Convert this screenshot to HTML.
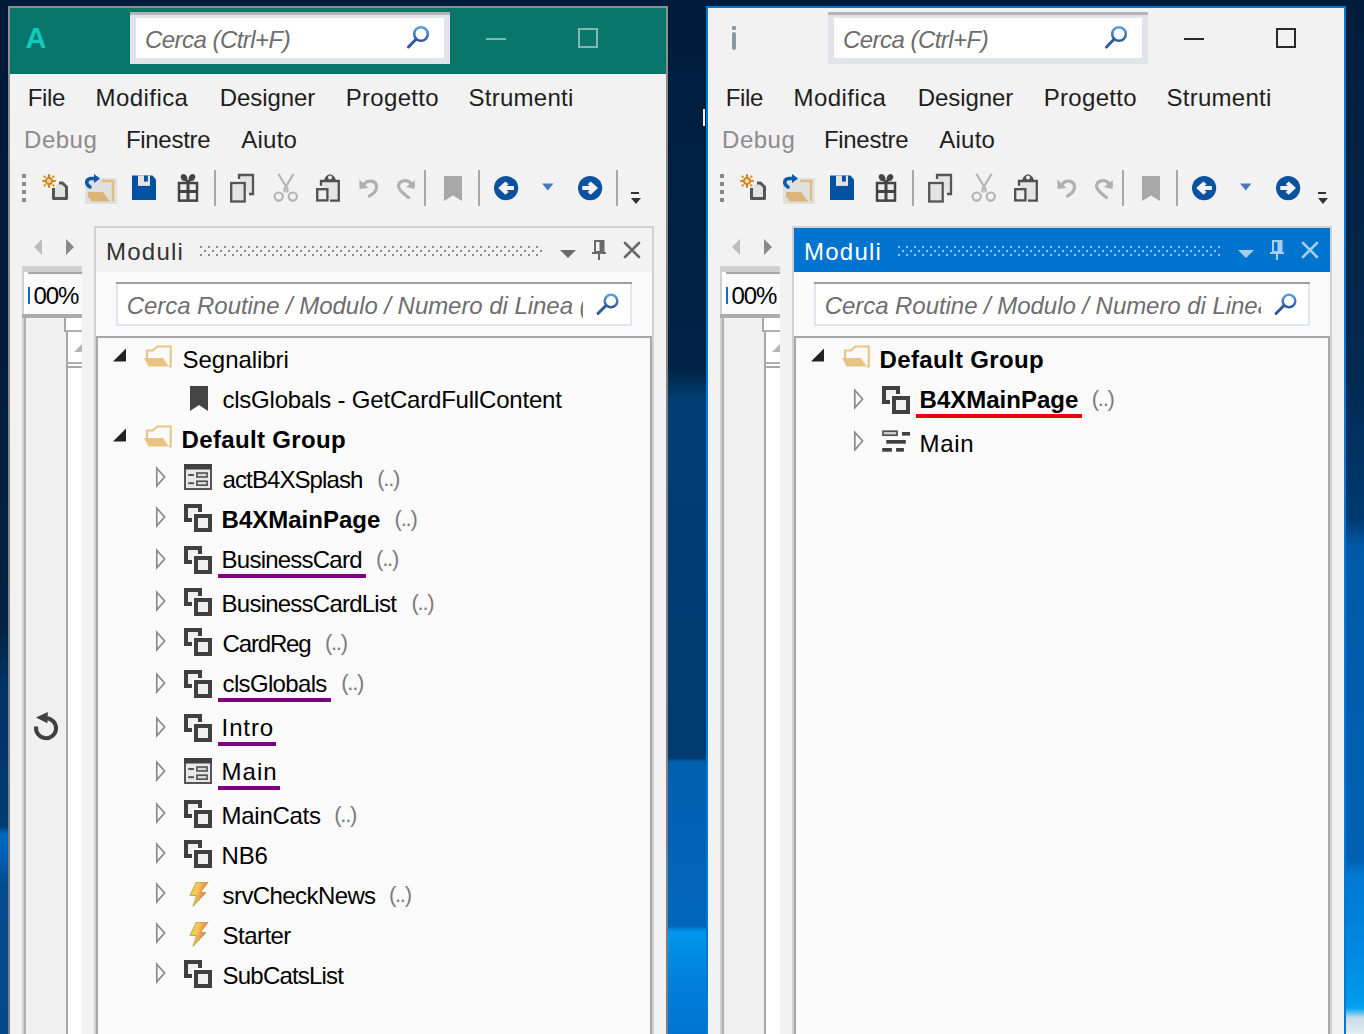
<!DOCTYPE html>
<html><head><meta charset="utf-8"><style>
html,body{margin:0;padding:0;}
body{width:1364px;height:1034px;overflow:hidden;position:relative;background:#001c3c;font-family:"Liberation Sans",sans-serif;}
body div, body svg{position:absolute;}
.t{font-size:24px;line-height:24px;white-space:pre;}
</style></head><body>
<div style="left:0px;top:0px;width:1364px;height:1034px;background:#001c3c;"></div>
<div style="left:0px;top:0px;width:8px;height:1034px;background:linear-gradient(#001a38 0px,#00213f 620px,#003368 690px,#003a72 826px,#0068c0 834px,#0060b4 856px,#004c90 884px,#004888 1034px);"></div>
<div style="left:668px;top:0px;width:38px;height:1034px;background:linear-gradient(#001c3c 0px,#002448 370px,#003e74 400px,#003a6e 758px,#0060b0 762px,#0066bc 926px,#0098ec 932px,#0080dc 980px,#0074d0 1034px);"></div>
<div style="left:1346px;top:0px;width:18px;height:1034px;background:linear-gradient(#001c3c 0px,#002a52 380px,#003a70 520px,#0058a8 545px,#0062b4 860px,#0078d0 874px,#0088e0 950px,#009ae8 1000px,#00a4f0 1008px,#c8dde8 1018px,#e4ecf0 1034px);"></div>
<div style="left:703px;top:109px;width:2px;height:17px;background:#f0f0f0;"></div>
<div style="left:8px;top:6px;width:660px;height:1028px;background:linear-gradient(#948e8a,#888584 300px,#7e7e7e 1028px);"></div>
<div style="left:10px;top:8px;width:656px;height:1026px;background:#f2f2f2;"></div>
<div style="left:10px;top:8px;width:656px;height:66px;background:#08766a;"></div>
<div class="t" style="left:25.6px;top:24.0px;font-weight:bold;color:#12cabe;letter-spacing:0.000px;font-size:29px;line-height:29px;">A</div>
<div style="left:130px;top:12px;width:320px;height:52px;background:#e1e4ea;"></div>
<div style="left:130px;top:12px;width:320px;height:3px;background:#b4b4b8;"></div>
<div style="left:136px;top:18px;width:308px;height:40px;background:#ffffff;"></div>
<div class="t" style="left:145.0px;top:27.8px;font-style:italic;color:#6d6d6d;letter-spacing:-0.538px;">Cerca (Ctrl+F)</div>
<svg style="left:404px;top:22px;" width="28" height="28" viewBox="0 0 28 28"><defs><linearGradient id="mg8" x1="0" y1="0" x2="0" y2="1"><stop offset="0" stop-color="#5aa0e0"/><stop offset="1" stop-color="#2c5aa0"/></linearGradient></defs><circle cx="17" cy="12" r="6.8" fill="none" stroke="url(#mg8)" stroke-width="2.6"/><line x1="4.5" y1="25" x2="12.2" y2="17" stroke="#2e5a9c" stroke-width="3" stroke-linecap="round"/></svg>
<div style="left:486px;top:38px;width:20px;height:2px;background:#80b8b0;"></div>
<div style="left:578px;top:28px;width:20px;height:20px;background:transparent;box-sizing:border-box;border:2px solid #80b8b0;"></div>
<div class="t" style="left:27.8px;top:86.0px;color:#1e1e1e;letter-spacing:-0.333px;">File</div>
<div class="t" style="left:95.6px;top:86.0px;color:#1e1e1e;letter-spacing:0.429px;">Modifica</div>
<div class="t" style="left:219.8px;top:86.0px;color:#1e1e1e;letter-spacing:-0.071px;">Designer</div>
<div class="t" style="left:345.8px;top:86.0px;color:#1e1e1e;letter-spacing:0.286px;">Progetto</div>
<div class="t" style="left:468.6px;top:86.0px;color:#1e1e1e;letter-spacing:0.250px;">Strumenti</div>
<div class="t" style="left:24.1px;top:128.0px;color:#8c8c8c;letter-spacing:0.500px;">Debug</div>
<div class="t" style="left:125.9px;top:128.0px;color:#1e1e1e;letter-spacing:-0.286px;">Finestre</div>
<div class="t" style="left:241.2px;top:128.0px;color:#1e1e1e;letter-spacing:0.250px;">Aiuto</div>
<div style="left:22px;top:174px;width:4px;height:4px;background:#8a8a8a;"></div>
<div style="left:22px;top:182px;width:4px;height:4px;background:#8a8a8a;"></div>
<div style="left:22px;top:190px;width:4px;height:4px;background:#8a8a8a;"></div>
<div style="left:22px;top:198px;width:4px;height:4px;background:#8a8a8a;"></div>
<svg style="left:38px;top:170px;" width="34" height="34" viewBox="0 0 34 34"><g stroke="#d08a20" stroke-width="2.2" stroke-linecap="round"><line x1="11" y1="5" x2="11" y2="17"/><line x1="5" y1="11" x2="17" y2="11"/><line x1="6.6" y1="6.6" x2="6.8" y2="6.8"/><line x1="15.4" y1="6.6" x2="15.2" y2="6.8"/><line x1="6.6" y1="15.4" x2="6.8" y2="15.2"/><line x1="15.4" y1="15.4" x2="15.2" y2="15.2"/></g><circle cx="11" cy="11" r="3" fill="#f2dcc0" stroke="#d08a20" stroke-width="2"/><path d="M15.5 18 V28.5 H28.5 V17 L24.5 13 H21" fill="#e2e2e2" stroke="#555" stroke-width="3" stroke-linejoin="round"/></svg>
<svg style="left:82px;top:170px;" width="36" height="36" viewBox="0 0 36 36"><rect x="3" y="8" width="32" height="26" fill="#e0e0e0"/><path d="M20 11 H31 V31" fill="none" stroke="#e0bc80" stroke-width="2.5"/><path d="M6 22 H21 L28 31.5 H9 L8 28 H6 Z" fill="#dcb478"/><path d="M8 17 C3 14 4 9 9 8.5 L15 8.5" fill="none" stroke="#0a5aaa" stroke-width="3.5" stroke-linecap="round"/><path d="M12 4 L18 8.5 L12 13 Z" fill="#0a5aaa"/></svg>
<svg style="left:131px;top:175px;" width="26" height="26" viewBox="0 0 26 26"><path d="M1 0.6 H21.5 L25 4.5 V25 H1 Z" fill="#0051a0"/><rect x="7" y="0.6" width="12" height="10.3" fill="#e4e4e4"/><rect x="13" y="0.6" width="3.8" height="6" fill="#0051a0"/></svg>
<svg style="left:176px;top:172px;" width="24" height="32" viewBox="0 0 24 32"><rect x="3" y="11" width="18" height="17.6" fill="#ededed" stroke="#444" stroke-width="2.5"/><line x1="12" y1="10" x2="12" y2="29.5" stroke="#444" stroke-width="3"/><line x1="2" y1="19.5" x2="22" y2="19.5" stroke="#444" stroke-width="3"/><ellipse cx="8" cy="5.5" rx="3" ry="3.6" transform="rotate(-35 8 5.5)" fill="#444"/><ellipse cx="16" cy="5.5" rx="3" ry="3.6" transform="rotate(35 16 5.5)" fill="#444"/><path d="M12 11 L9 6 M12 11 L15 6" stroke="#444" stroke-width="2.5"/></svg>
<div style="left:214px;top:170px;width:2px;height:36px;background:#a8a8a8;"></div>
<svg style="left:228px;top:172px;" width="28" height="32" viewBox="0 0 28 32"><path d="M11 7 V3 H25 V22 H21" fill="#e4e4e4" stroke="#555" stroke-width="2.3"/><rect x="3.2" y="11" width="13.5" height="18.5" fill="#e4e4e4" stroke="#555" stroke-width="2.3"/></svg>
<svg style="left:272px;top:172px;" width="30" height="32" viewBox="0 0 30 32"><g fill="none" stroke="#b4b4b4" stroke-width="2.2"><path d="M6.5 2 L15.5 17 V20.5 M21.5 2 L12.5 17 V20.5"/><circle cx="6.7" cy="24.6" r="4.1"/><circle cx="20.8" cy="24.6" r="4.1"/></g></svg>
<svg style="left:314px;top:172px;" width="28" height="32" viewBox="0 0 28 32"><path d="M7 13.8 V9 H24.8 V28.7 H16" fill="#e4e4e4" stroke="#505050" stroke-width="2.3"/><path d="M9.5 9 L11.5 5 Q15.8 -0.5 20.5 5 L22.5 9 Z" fill="#505050"/><circle cx="16" cy="5.6" r="2" fill="#f0f0f0"/><rect x="3.2" y="17.2" width="10.2" height="11.2" fill="#eeeeee" stroke="#505050" stroke-width="2.3"/></svg>
<svg style="left:358px;top:178px;" width="22" height="22" viewBox="0 0 22 22"><path d="M6 6.5 C9 1.5 18.5 1.5 18.5 9 C18.5 12.5 16 15.5 11.5 18" fill="none" stroke="#b0b0b0" stroke-width="3.2" stroke-linecap="round"/><path d="M1.3 1.5 L1.5 11 L10.5 10 Z" fill="#b0b0b0"/></svg>
<svg style="left:395px;top:178px;" width="22" height="22" viewBox="0 0 22 22"><path d="M16 5.5 C12 1 4 2 3.5 8.5 C4 12 8 15.5 13.5 19.5" fill="none" stroke="#b0b0b0" stroke-width="3.2" stroke-linecap="round"/><path d="M19.8 2 L19.5 11 L11 9 Z" fill="#b0b0b0"/><circle cx="17.2" cy="7.6" r="2.6" fill="#b0b0b0"/></svg>
<div style="left:424px;top:170px;width:2px;height:36px;background:#a8a8a8;"></div>
<svg style="left:443px;top:175px;" width="20" height="28" viewBox="0 0 20 28"><path d="M1 1 H19 V26 L10 20.5 L1 26 Z" fill="#a8a8a8"/></svg>
<div style="left:478px;top:170px;width:2px;height:36px;background:#a8a8a8;"></div>
<svg style="left:494px;top:175.7px;" width="25" height="25" viewBox="0 0 25 25"><circle cx="12.1" cy="12.1" r="12.1" fill="#0a52a0"/><path d="M4.2 12.1 L11.4 5.4 L14.6 8.2 L12.4 10.1 H19.9 V14.1 H12.4 L14.6 16 L11.4 18.8 Z" fill="#f2f2f2"/></svg>
<svg style="left:542px;top:183px;" width="12" height="8" viewBox="0 0 12 8"><path d="M0 0.5 H11.5 L5.75 7.5 Z" fill="#4a78b8"/></svg>
<svg style="left:578px;top:175.7px;" width="25" height="25" viewBox="0 0 25 25"><circle cx="12.1" cy="12.1" r="12.1" fill="#0a52a0"/><path d="M20 12.1 L12.8 5.4 L9.6 8.2 L11.8 10.1 H4.3 V14.1 H11.8 L9.6 16 L12.8 18.8 Z" fill="#f2f2f2"/></svg>
<div style="left:616px;top:170px;width:2px;height:36px;background:#a8a8a8;"></div>
<div style="left:631px;top:192px;width:8px;height:2px;background:#333;"></div>
<svg style="left:630.5px;top:197.5px;" width="10" height="7" viewBox="0 0 10 7"><path d="M0 0 H10 L5 6 Z" fill="#333"/></svg>
<svg style="left:33px;top:239px;" width="10" height="17" viewBox="0 0 10 17"><path d="M9 0 V16 L1 8 Z" fill="#bcbcbc"/></svg>
<svg style="left:65px;top:239px;" width="10" height="17" viewBox="0 0 10 17"><path d="M1 0 V16 L9 8 Z" fill="#8a8a8a"/></svg>
<div style="left:22px;top:266px;width:60px;height:768px;background:#d0d0d0;"></div>
<div style="left:24px;top:272px;width:58px;height:762px;background:#b0b0b0;"></div>
<div style="left:24px;top:272px;width:4px;height:43px;background:#ffffff;"></div>
<div style="left:28px;top:272px;width:54px;height:2px;background:#a8a8a8;"></div>
<div style="left:28px;top:274px;width:54px;height:40px;background:#fafafa;"></div>
<div style="left:28px;top:287px;width:1.5px;height:17px;background:#1a6ac0;"></div>
<div class="t" style="left:33.4px;top:283.8px;color:#000;letter-spacing:-1.000px;">00%</div>
<div style="left:22px;top:314px;width:60px;height:4px;background:#ababab;"></div>
<div style="left:26px;top:318px;width:40px;height:716px;background:#f0f0f0;"></div>
<div style="left:64px;top:318px;width:2px;height:14px;background:#a8a8a8;"></div>
<div style="left:66px;top:318px;width:16px;height:12px;background:#ffffff;"></div>
<div style="left:66px;top:330px;width:16px;height:2px;background:#b0b0b0;"></div>
<div style="left:66px;top:332px;width:2px;height:702px;background:#a8a8a8;"></div>
<div style="left:68px;top:332px;width:14px;height:30px;background:#ffffff;"></div>
<svg style="left:74px;top:344px;" width="8" height="8" viewBox="0 0 8 8"><path d="M8 0 V8 H0 Z" fill="#b4b4b4"/></svg>
<div style="left:68px;top:362px;width:14px;height:2px;background:#b0b0b0;"></div>
<div style="left:68px;top:364px;width:14px;height:2px;background:#ffffff;"></div>
<div style="left:68px;top:366px;width:14px;height:2px;background:#a8a8a8;"></div>
<div style="left:68px;top:368px;width:14px;height:666px;background:#ffffff;"></div>
<svg style="left:33px;top:712px;" width="26" height="30" viewBox="0 0 26 30"><path d="M13.5 6.2 A10 10 0 1 1 3.2 14.5" fill="none" stroke="#404040" stroke-width="4"/><path d="M3 5.6 L14.8 0 L14.4 11.2 Z" fill="#404040"/></svg>
<div style="left:94px;top:226px;width:560px;height:808px;background:#d0d0d0;"></div>
<div style="left:96px;top:228px;width:556px;height:806px;background:#fafafa;"></div>
<div style="left:96px;top:228px;width:556px;height:44px;background:#f2f2f2;"></div>
<div class="t" style="left:106.1px;top:239.8px;color:#333333;letter-spacing:1.200px;">Moduli</div>
<svg style="left:200px;top:246px;" width="342" height="10" viewBox="0 0 342 10"><defs><pattern id="dp94" width="8" height="8" patternUnits="userSpaceOnUse"><rect x="0" y="0" width="2" height="2" fill="#8a8a8a"/><rect x="4" y="4" width="2" height="2" fill="#8a8a8a"/></pattern></defs><rect width="342" height="10" fill="url(#dp94)"/></svg>
<svg style="left:560px;top:250px;" width="16" height="8" viewBox="0 0 16 8"><path d="M0 0 H16 L8 8 Z" fill="#6a6a6a"/></svg>
<svg style="left:592px;top:240px;" width="14" height="20" viewBox="0 0 14 20"><path d="M3 1 H11.5 V12 H3 Z" fill="none" stroke="#6a6a6a" stroke-width="2"/><rect x="7.5" y="1" width="4" height="11" fill="#6a6a6a"/><rect x="0" y="12" width="14" height="2" fill="#6a6a6a"/><rect x="6" y="14" width="2" height="6" fill="#6a6a6a"/></svg>
<svg style="left:623px;top:241px;" width="18" height="18" viewBox="0 0 18 18"><path d="M2 2 L16 16 M16 2 L2 16" stroke="#6a6a6a" stroke-width="2.6" stroke-linecap="round"/></svg>
<div style="left:116px;top:282px;width:516px;height:44px;background:#e0e6ee;"></div>
<div style="left:116px;top:282px;width:516px;height:2px;background:#9c9ca4;"></div>
<div style="left:118px;top:284px;width:512px;height:40px;background:#ffffff;"></div>
<div style="left:120px;top:284px;width:463px;height:40px;overflow:hidden">
<div class="t" style="left:6.7px;top:9.7px;font-style:italic;color:#6e6e6e;letter-spacing:-0.049px;">Cerca Routine / Modulo / Numero di Linea (</div>
</div>
<svg style="left:594px;top:291px;" width="28" height="28" viewBox="0 0 28 28"><defs><linearGradient id="pg94" x1="0" y1="0" x2="0" y2="1"><stop offset="0" stop-color="#5aa0e0"/><stop offset="1" stop-color="#2c5aa0"/></linearGradient></defs><circle cx="17" cy="10" r="6.3" fill="none" stroke="url(#pg94)" stroke-width="2.5"/><line x1="4" y1="22.5" x2="11.5" y2="15" stroke="#2e5a9c" stroke-width="3" stroke-linecap="round"/></svg>
<div style="left:96px;top:336px;width:556px;height:698px;background:#a8a8a8;"></div>
<div style="left:98px;top:338px;width:552px;height:696px;background:#fafafa;"></div>
<svg style="left:112px;top:347.6px;" width="15" height="14" viewBox="0 0 15 14"><path d="M14 0.5 V13.5 H1 Z" fill="#222"/></svg>
<svg style="left:143px;top:345px;" width="30" height="23" viewBox="0 0 30 23"><path d="M4 13 V5.5 H9.9 L14.3 1.5 H27.7 V21.5 H26" fill="none" stroke="#e8c382" stroke-width="2.1"/><path d="M1.1 13 H20 L25.8 21.6 H5.5 Z" fill="#e8c382"/></svg>
<div class="t" style="left:182.6px;top:348.0px;color:#000;letter-spacing:-0.056px;">Segnalibri</div>
<svg style="left:190px;top:386px;" width="18" height="26" viewBox="0 0 18 26"><path d="M0 0 H18 V25 L9 19 L0 25 Z" fill="#444"/></svg>
<div class="t" style="left:222.4px;top:388.0px;color:#000;letter-spacing:-0.200px;">clsGlobals - GetCardFullContent</div>
<svg style="left:112px;top:427.6px;" width="15" height="14" viewBox="0 0 15 14"><path d="M14 0.5 V13.5 H1 Z" fill="#222"/></svg>
<svg style="left:143px;top:425px;" width="30" height="23" viewBox="0 0 30 23"><path d="M4 13 V5.5 H9.9 L14.3 1.5 H27.7 V21.5 H26" fill="none" stroke="#e8c382" stroke-width="2.1"/><path d="M1.1 13 H20 L25.8 21.6 H5.5 Z" fill="#e8c382"/></svg>
<div class="t" style="left:181.6px;top:427.6px;font-weight:bold;color:#000;letter-spacing:0.333px;">Default Group</div>
<svg style="left:155px;top:466px;" width="12" height="22" viewBox="0 0 12 22"><path d="M1.8 2.2 L9.6 11 L1.8 19.8 Z" fill="none" stroke="#8a8a8a" stroke-width="1.7" stroke-linejoin="miter"/></svg>
<svg style="left:184px;top:464px;" width="28" height="26" viewBox="0 0 28 26"><rect x="1" y="1" width="26" height="24" fill="#e8e8ea" stroke="#555" stroke-width="2"/><rect x="0" y="0" width="28" height="5.5" fill="#404040"/><rect x="4.3" y="10" width="5.6" height="2" fill="#505050"/><rect x="4.3" y="18.2" width="5.6" height="2" fill="#505050"/><rect x="12.9" y="9" width="10.2" height="4" fill="#d8d8d8" stroke="#505050" stroke-width="1.6"/><rect x="12.9" y="17.2" width="10.2" height="4" fill="#d8d8d8" stroke="#505050" stroke-width="1.6"/></svg>
<div class="t" style="left:222.6px;top:468.0px;color:#000;letter-spacing:-0.909px;">actB4XSplash</div>
<div class="t" style="left:377.2px;top:468.0px;font-size:22px;line-height:22px;color:#7c7c80;letter-spacing:-1.250px;">(..)</div>
<svg style="left:155px;top:506px;" width="12" height="22" viewBox="0 0 12 22"><path d="M1.8 2.2 L9.6 11 L1.8 19.8 Z" fill="none" stroke="#8a8a8a" stroke-width="1.7" stroke-linejoin="miter"/></svg>
<svg style="left:184px;top:504px;" width="28" height="28" viewBox="0 0 28 28"><rect x="2" y="2" width="14" height="14" fill="#f0f0f2"/><path d="M8 16 H2 V2 H16 V8" fill="none" stroke="#404040" stroke-width="4" stroke-linecap="square"/><rect x="8" y="8" width="22" height="22" fill="#fafafa"/><rect x="12" y="12" width="14" height="14" fill="#f0f0f2" stroke="#404040" stroke-width="4"/></svg>
<div class="t" style="left:221.6px;top:508.0px;font-weight:bold;color:#000;letter-spacing:0.000px;">B4XMainPage</div>
<div class="t" style="left:394.6px;top:508.0px;font-size:22px;line-height:22px;color:#7c7c80;letter-spacing:-1.250px;">(..)</div>
<svg style="left:155px;top:548px;" width="12" height="22" viewBox="0 0 12 22"><path d="M1.8 2.2 L9.6 11 L1.8 19.8 Z" fill="none" stroke="#8a8a8a" stroke-width="1.7" stroke-linejoin="miter"/></svg>
<svg style="left:184px;top:546px;" width="28" height="28" viewBox="0 0 28 28"><rect x="2" y="2" width="14" height="14" fill="#f0f0f2"/><path d="M8 16 H2 V2 H16 V8" fill="none" stroke="#404040" stroke-width="4" stroke-linecap="square"/><rect x="8" y="8" width="22" height="22" fill="#fafafa"/><rect x="12" y="12" width="14" height="14" fill="#f0f0f2" stroke="#404040" stroke-width="4"/></svg>
<div class="t" style="left:221.6px;top:548.0px;color:#000;letter-spacing:-0.773px;">BusinessCard</div>
<div class="t" style="left:376.1px;top:548.0px;font-size:22px;line-height:22px;color:#7c7c80;letter-spacing:-1.250px;">(..)</div>
<div style="left:218px;top:574px;width:148px;height:4px;background:#800080;"></div>
<svg style="left:155px;top:590px;" width="12" height="22" viewBox="0 0 12 22"><path d="M1.8 2.2 L9.6 11 L1.8 19.8 Z" fill="none" stroke="#8a8a8a" stroke-width="1.7" stroke-linejoin="miter"/></svg>
<svg style="left:184px;top:588px;" width="28" height="28" viewBox="0 0 28 28"><rect x="2" y="2" width="14" height="14" fill="#f0f0f2"/><path d="M8 16 H2 V2 H16 V8" fill="none" stroke="#404040" stroke-width="4" stroke-linecap="square"/><rect x="8" y="8" width="22" height="22" fill="#fafafa"/><rect x="12" y="12" width="14" height="14" fill="#f0f0f2" stroke="#404040" stroke-width="4"/></svg>
<div class="t" style="left:221.6px;top:592.0px;color:#000;letter-spacing:-0.767px;">BusinessCardList</div>
<div class="t" style="left:411.5px;top:592.0px;font-size:22px;line-height:22px;color:#7c7c80;letter-spacing:-1.250px;">(..)</div>
<svg style="left:155px;top:630px;" width="12" height="22" viewBox="0 0 12 22"><path d="M1.8 2.2 L9.6 11 L1.8 19.8 Z" fill="none" stroke="#8a8a8a" stroke-width="1.7" stroke-linejoin="miter"/></svg>
<svg style="left:184px;top:628px;" width="28" height="28" viewBox="0 0 28 28"><rect x="2" y="2" width="14" height="14" fill="#f0f0f2"/><path d="M8 16 H2 V2 H16 V8" fill="none" stroke="#404040" stroke-width="4" stroke-linecap="square"/><rect x="8" y="8" width="22" height="22" fill="#fafafa"/><rect x="12" y="12" width="14" height="14" fill="#f0f0f2" stroke="#404040" stroke-width="4"/></svg>
<div class="t" style="left:222.6px;top:632.0px;color:#000;letter-spacing:-1.167px;">CardReg</div>
<div class="t" style="left:324.9px;top:632.0px;font-size:22px;line-height:22px;color:#7c7c80;letter-spacing:-1.250px;">(..)</div>
<svg style="left:155px;top:672px;" width="12" height="22" viewBox="0 0 12 22"><path d="M1.8 2.2 L9.6 11 L1.8 19.8 Z" fill="none" stroke="#8a8a8a" stroke-width="1.7" stroke-linejoin="miter"/></svg>
<svg style="left:184px;top:670px;" width="28" height="28" viewBox="0 0 28 28"><rect x="2" y="2" width="14" height="14" fill="#f0f0f2"/><path d="M8 16 H2 V2 H16 V8" fill="none" stroke="#404040" stroke-width="4" stroke-linecap="square"/><rect x="8" y="8" width="22" height="22" fill="#fafafa"/><rect x="12" y="12" width="14" height="14" fill="#f0f0f2" stroke="#404040" stroke-width="4"/></svg>
<div class="t" style="left:222.6px;top:672.0px;color:#000;letter-spacing:-0.667px;">clsGlobals</div>
<div class="t" style="left:341.2px;top:672.0px;font-size:22px;line-height:22px;color:#7c7c80;letter-spacing:-1.250px;">(..)</div>
<div style="left:218px;top:698px;width:113px;height:4px;background:#800080;"></div>
<svg style="left:155px;top:716px;" width="12" height="22" viewBox="0 0 12 22"><path d="M1.8 2.2 L9.6 11 L1.8 19.8 Z" fill="none" stroke="#8a8a8a" stroke-width="1.7" stroke-linejoin="miter"/></svg>
<svg style="left:184px;top:714px;" width="28" height="28" viewBox="0 0 28 28"><rect x="2" y="2" width="14" height="14" fill="#f0f0f2"/><path d="M8 16 H2 V2 H16 V8" fill="none" stroke="#404040" stroke-width="4" stroke-linecap="square"/><rect x="8" y="8" width="22" height="22" fill="#fafafa"/><rect x="12" y="12" width="14" height="14" fill="#f0f0f2" stroke="#404040" stroke-width="4"/></svg>
<div class="t" style="left:221.6px;top:716.0px;color:#000;letter-spacing:0.875px;">Intro</div>
<div style="left:218px;top:742px;width:58px;height:4px;background:#800080;"></div>
<svg style="left:155px;top:760px;" width="12" height="22" viewBox="0 0 12 22"><path d="M1.8 2.2 L9.6 11 L1.8 19.8 Z" fill="none" stroke="#8a8a8a" stroke-width="1.7" stroke-linejoin="miter"/></svg>
<svg style="left:184px;top:758px;" width="28" height="26" viewBox="0 0 28 26"><rect x="1" y="1" width="26" height="24" fill="#e8e8ea" stroke="#555" stroke-width="2"/><rect x="0" y="0" width="28" height="5.5" fill="#404040"/><rect x="4.3" y="10" width="5.6" height="2" fill="#505050"/><rect x="4.3" y="18.2" width="5.6" height="2" fill="#505050"/><rect x="12.9" y="9" width="10.2" height="4" fill="#d8d8d8" stroke="#505050" stroke-width="1.6"/><rect x="12.9" y="17.2" width="10.2" height="4" fill="#d8d8d8" stroke="#505050" stroke-width="1.6"/></svg>
<div class="t" style="left:221.6px;top:760.0px;color:#000;letter-spacing:1.000px;">Main</div>
<div style="left:218px;top:786px;width:62px;height:4px;background:#800080;"></div>
<svg style="left:155px;top:802px;" width="12" height="22" viewBox="0 0 12 22"><path d="M1.8 2.2 L9.6 11 L1.8 19.8 Z" fill="none" stroke="#8a8a8a" stroke-width="1.7" stroke-linejoin="miter"/></svg>
<svg style="left:184px;top:800px;" width="28" height="28" viewBox="0 0 28 28"><rect x="2" y="2" width="14" height="14" fill="#f0f0f2"/><path d="M8 16 H2 V2 H16 V8" fill="none" stroke="#404040" stroke-width="4" stroke-linecap="square"/><rect x="8" y="8" width="22" height="22" fill="#fafafa"/><rect x="12" y="12" width="14" height="14" fill="#f0f0f2" stroke="#404040" stroke-width="4"/></svg>
<div class="t" style="left:221.6px;top:804.0px;color:#000;letter-spacing:-0.286px;">MainCats</div>
<div class="t" style="left:334.3px;top:804.0px;font-size:22px;line-height:22px;color:#7c7c80;letter-spacing:-1.250px;">(..)</div>
<svg style="left:155px;top:842px;" width="12" height="22" viewBox="0 0 12 22"><path d="M1.8 2.2 L9.6 11 L1.8 19.8 Z" fill="none" stroke="#8a8a8a" stroke-width="1.7" stroke-linejoin="miter"/></svg>
<svg style="left:184px;top:840px;" width="28" height="28" viewBox="0 0 28 28"><rect x="2" y="2" width="14" height="14" fill="#f0f0f2"/><path d="M8 16 H2 V2 H16 V8" fill="none" stroke="#404040" stroke-width="4" stroke-linecap="square"/><rect x="8" y="8" width="22" height="22" fill="#fafafa"/><rect x="12" y="12" width="14" height="14" fill="#f0f0f2" stroke="#404040" stroke-width="4"/></svg>
<div class="t" style="left:221.6px;top:844.0px;color:#000;letter-spacing:-0.250px;">NB6</div>
<svg style="left:155px;top:882px;" width="12" height="22" viewBox="0 0 12 22"><path d="M1.8 2.2 L9.6 11 L1.8 19.8 Z" fill="none" stroke="#8a8a8a" stroke-width="1.7" stroke-linejoin="miter"/></svg>
<svg style="left:189px;top:882px;" width="20" height="26" viewBox="0 0 20 26"><defs><linearGradient id="lg882" x1="0" y1="0" x2="1" y2="0.4"><stop offset="0" stop-color="#d8d050"/><stop offset="0.45" stop-color="#f8c850"/><stop offset="1" stop-color="#e85868"/></linearGradient></defs><path d="M7 0.5 H19 L11.5 10.5 H17 L4 24.5 L7.5 13.5 H1 Z" fill="url(#lg882)" stroke="#b0a040" stroke-width="0.8"/></svg>
<div class="t" style="left:222.6px;top:884.0px;color:#000;letter-spacing:-0.591px;">srvCheckNews</div>
<div class="t" style="left:388.9px;top:884.0px;font-size:22px;line-height:22px;color:#7c7c80;letter-spacing:-1.250px;">(..)</div>
<svg style="left:155px;top:922px;" width="12" height="22" viewBox="0 0 12 22"><path d="M1.8 2.2 L9.6 11 L1.8 19.8 Z" fill="none" stroke="#8a8a8a" stroke-width="1.7" stroke-linejoin="miter"/></svg>
<svg style="left:189px;top:922px;" width="20" height="26" viewBox="0 0 20 26"><defs><linearGradient id="lg922" x1="0" y1="0" x2="1" y2="0.4"><stop offset="0" stop-color="#d8d050"/><stop offset="0.45" stop-color="#f8c850"/><stop offset="1" stop-color="#e85868"/></linearGradient></defs><path d="M7 0.5 H19 L11.5 10.5 H17 L4 24.5 L7.5 13.5 H1 Z" fill="url(#lg922)" stroke="#b0a040" stroke-width="0.8"/></svg>
<div class="t" style="left:222.6px;top:924.0px;color:#000;letter-spacing:-0.550px;">Starter</div>
<svg style="left:155px;top:962px;" width="12" height="22" viewBox="0 0 12 22"><path d="M1.8 2.2 L9.6 11 L1.8 19.8 Z" fill="none" stroke="#8a8a8a" stroke-width="1.7" stroke-linejoin="miter"/></svg>
<svg style="left:184px;top:960px;" width="28" height="28" viewBox="0 0 28 28"><rect x="2" y="2" width="14" height="14" fill="#f0f0f2"/><path d="M8 16 H2 V2 H16 V8" fill="none" stroke="#404040" stroke-width="4" stroke-linecap="square"/><rect x="8" y="8" width="22" height="22" fill="#fafafa"/><rect x="12" y="12" width="14" height="14" fill="#f0f0f2" stroke="#404040" stroke-width="4"/></svg>
<div class="t" style="left:222.6px;top:964.0px;color:#000;letter-spacing:-0.800px;">SubCatsList</div>
<div style="left:706px;top:6px;width:640px;height:1028px;background:#0078d7;"></div>
<div style="left:708px;top:8px;width:636px;height:1026px;background:#f2f2f2;"></div>
<div style="left:731.5px;top:26px;width:4.6px;height:3.8px;background:#8a9aa2;border-radius:1px;"></div>
<div style="left:731.5px;top:32px;width:4.6px;height:18px;background:#8a9aa2;border-radius:2px;"></div>
<div style="left:828px;top:12px;width:320px;height:52px;background:#e1e4ea;"></div>
<div style="left:828px;top:12px;width:320px;height:3px;background:#b4b4b8;"></div>
<div style="left:834px;top:18px;width:308px;height:40px;background:#ffffff;"></div>
<div class="t" style="left:843.0px;top:27.8px;font-style:italic;color:#6d6d6d;letter-spacing:-0.538px;">Cerca (Ctrl+F)</div>
<svg style="left:1102px;top:22px;" width="28" height="28" viewBox="0 0 28 28"><defs><linearGradient id="mg706" x1="0" y1="0" x2="0" y2="1"><stop offset="0" stop-color="#5aa0e0"/><stop offset="1" stop-color="#2c5aa0"/></linearGradient></defs><circle cx="17" cy="12" r="6.8" fill="none" stroke="url(#mg706)" stroke-width="2.6"/><line x1="4.5" y1="25" x2="12.2" y2="17" stroke="#2e5a9c" stroke-width="3" stroke-linecap="round"/></svg>
<div style="left:1184px;top:38px;width:20px;height:2px;background:#2a2a2a;"></div>
<div style="left:1276px;top:28px;width:20px;height:20px;background:transparent;box-sizing:border-box;border:2px solid #2a2a2a;"></div>
<div class="t" style="left:725.8px;top:86.0px;color:#1e1e1e;letter-spacing:-0.333px;">File</div>
<div class="t" style="left:793.6px;top:86.0px;color:#1e1e1e;letter-spacing:0.429px;">Modifica</div>
<div class="t" style="left:917.8px;top:86.0px;color:#1e1e1e;letter-spacing:-0.071px;">Designer</div>
<div class="t" style="left:1043.8px;top:86.0px;color:#1e1e1e;letter-spacing:0.286px;">Progetto</div>
<div class="t" style="left:1166.6px;top:86.0px;color:#1e1e1e;letter-spacing:0.250px;">Strumenti</div>
<div class="t" style="left:722.1px;top:128.0px;color:#8c8c8c;letter-spacing:0.500px;">Debug</div>
<div class="t" style="left:823.9px;top:128.0px;color:#1e1e1e;letter-spacing:-0.286px;">Finestre</div>
<div class="t" style="left:939.2px;top:128.0px;color:#1e1e1e;letter-spacing:0.250px;">Aiuto</div>
<div style="left:720px;top:174px;width:4px;height:4px;background:#8a8a8a;"></div>
<div style="left:720px;top:182px;width:4px;height:4px;background:#8a8a8a;"></div>
<div style="left:720px;top:190px;width:4px;height:4px;background:#8a8a8a;"></div>
<div style="left:720px;top:198px;width:4px;height:4px;background:#8a8a8a;"></div>
<svg style="left:736px;top:170px;" width="34" height="34" viewBox="0 0 34 34"><g stroke="#d08a20" stroke-width="2.2" stroke-linecap="round"><line x1="11" y1="5" x2="11" y2="17"/><line x1="5" y1="11" x2="17" y2="11"/><line x1="6.6" y1="6.6" x2="6.8" y2="6.8"/><line x1="15.4" y1="6.6" x2="15.2" y2="6.8"/><line x1="6.6" y1="15.4" x2="6.8" y2="15.2"/><line x1="15.4" y1="15.4" x2="15.2" y2="15.2"/></g><circle cx="11" cy="11" r="3" fill="#f2dcc0" stroke="#d08a20" stroke-width="2"/><path d="M15.5 18 V28.5 H28.5 V17 L24.5 13 H21" fill="#e2e2e2" stroke="#555" stroke-width="3" stroke-linejoin="round"/></svg>
<svg style="left:780px;top:170px;" width="36" height="36" viewBox="0 0 36 36"><rect x="3" y="8" width="32" height="26" fill="#e0e0e0"/><path d="M20 11 H31 V31" fill="none" stroke="#e0bc80" stroke-width="2.5"/><path d="M6 22 H21 L28 31.5 H9 L8 28 H6 Z" fill="#dcb478"/><path d="M8 17 C3 14 4 9 9 8.5 L15 8.5" fill="none" stroke="#0a5aaa" stroke-width="3.5" stroke-linecap="round"/><path d="M12 4 L18 8.5 L12 13 Z" fill="#0a5aaa"/></svg>
<svg style="left:829px;top:175px;" width="26" height="26" viewBox="0 0 26 26"><path d="M1 0.6 H21.5 L25 4.5 V25 H1 Z" fill="#0051a0"/><rect x="7" y="0.6" width="12" height="10.3" fill="#e4e4e4"/><rect x="13" y="0.6" width="3.8" height="6" fill="#0051a0"/></svg>
<svg style="left:874px;top:172px;" width="24" height="32" viewBox="0 0 24 32"><rect x="3" y="11" width="18" height="17.6" fill="#ededed" stroke="#444" stroke-width="2.5"/><line x1="12" y1="10" x2="12" y2="29.5" stroke="#444" stroke-width="3"/><line x1="2" y1="19.5" x2="22" y2="19.5" stroke="#444" stroke-width="3"/><ellipse cx="8" cy="5.5" rx="3" ry="3.6" transform="rotate(-35 8 5.5)" fill="#444"/><ellipse cx="16" cy="5.5" rx="3" ry="3.6" transform="rotate(35 16 5.5)" fill="#444"/><path d="M12 11 L9 6 M12 11 L15 6" stroke="#444" stroke-width="2.5"/></svg>
<div style="left:912px;top:170px;width:2px;height:36px;background:#a8a8a8;"></div>
<svg style="left:926px;top:172px;" width="28" height="32" viewBox="0 0 28 32"><path d="M11 7 V3 H25 V22 H21" fill="#e4e4e4" stroke="#555" stroke-width="2.3"/><rect x="3.2" y="11" width="13.5" height="18.5" fill="#e4e4e4" stroke="#555" stroke-width="2.3"/></svg>
<svg style="left:970px;top:172px;" width="30" height="32" viewBox="0 0 30 32"><g fill="none" stroke="#b4b4b4" stroke-width="2.2"><path d="M6.5 2 L15.5 17 V20.5 M21.5 2 L12.5 17 V20.5"/><circle cx="6.7" cy="24.6" r="4.1"/><circle cx="20.8" cy="24.6" r="4.1"/></g></svg>
<svg style="left:1012px;top:172px;" width="28" height="32" viewBox="0 0 28 32"><path d="M7 13.8 V9 H24.8 V28.7 H16" fill="#e4e4e4" stroke="#505050" stroke-width="2.3"/><path d="M9.5 9 L11.5 5 Q15.8 -0.5 20.5 5 L22.5 9 Z" fill="#505050"/><circle cx="16" cy="5.6" r="2" fill="#f0f0f0"/><rect x="3.2" y="17.2" width="10.2" height="11.2" fill="#eeeeee" stroke="#505050" stroke-width="2.3"/></svg>
<svg style="left:1056px;top:178px;" width="22" height="22" viewBox="0 0 22 22"><path d="M6 6.5 C9 1.5 18.5 1.5 18.5 9 C18.5 12.5 16 15.5 11.5 18" fill="none" stroke="#b0b0b0" stroke-width="3.2" stroke-linecap="round"/><path d="M1.3 1.5 L1.5 11 L10.5 10 Z" fill="#b0b0b0"/></svg>
<svg style="left:1093px;top:178px;" width="22" height="22" viewBox="0 0 22 22"><path d="M16 5.5 C12 1 4 2 3.5 8.5 C4 12 8 15.5 13.5 19.5" fill="none" stroke="#b0b0b0" stroke-width="3.2" stroke-linecap="round"/><path d="M19.8 2 L19.5 11 L11 9 Z" fill="#b0b0b0"/><circle cx="17.2" cy="7.6" r="2.6" fill="#b0b0b0"/></svg>
<div style="left:1122px;top:170px;width:2px;height:36px;background:#a8a8a8;"></div>
<svg style="left:1141px;top:175px;" width="20" height="28" viewBox="0 0 20 28"><path d="M1 1 H19 V26 L10 20.5 L1 26 Z" fill="#a8a8a8"/></svg>
<div style="left:1176px;top:170px;width:2px;height:36px;background:#a8a8a8;"></div>
<svg style="left:1192px;top:175.7px;" width="25" height="25" viewBox="0 0 25 25"><circle cx="12.1" cy="12.1" r="12.1" fill="#0a52a0"/><path d="M4.2 12.1 L11.4 5.4 L14.6 8.2 L12.4 10.1 H19.9 V14.1 H12.4 L14.6 16 L11.4 18.8 Z" fill="#f2f2f2"/></svg>
<svg style="left:1240px;top:183px;" width="12" height="8" viewBox="0 0 12 8"><path d="M0 0.5 H11.5 L5.75 7.5 Z" fill="#4a78b8"/></svg>
<svg style="left:1276px;top:175.7px;" width="25" height="25" viewBox="0 0 25 25"><circle cx="12.1" cy="12.1" r="12.1" fill="#0a52a0"/><path d="M20 12.1 L12.8 5.4 L9.6 8.2 L11.8 10.1 H4.3 V14.1 H11.8 L9.6 16 L12.8 18.8 Z" fill="#f2f2f2"/></svg>
<div style="left:1318px;top:192px;width:8px;height:2px;background:#333;"></div>
<svg style="left:1317.5px;top:197.5px;" width="10" height="7" viewBox="0 0 10 7"><path d="M0 0 H10 L5 6 Z" fill="#333"/></svg>
<svg style="left:731px;top:239px;" width="10" height="17" viewBox="0 0 10 17"><path d="M9 0 V16 L1 8 Z" fill="#bcbcbc"/></svg>
<svg style="left:763px;top:239px;" width="10" height="17" viewBox="0 0 10 17"><path d="M1 0 V16 L9 8 Z" fill="#8a8a8a"/></svg>
<div style="left:720px;top:266px;width:60px;height:768px;background:#d0d0d0;"></div>
<div style="left:722px;top:272px;width:58px;height:762px;background:#b0b0b0;"></div>
<div style="left:722px;top:272px;width:4px;height:43px;background:#ffffff;"></div>
<div style="left:726px;top:272px;width:54px;height:2px;background:#a8a8a8;"></div>
<div style="left:726px;top:274px;width:54px;height:40px;background:#fafafa;"></div>
<div style="left:726px;top:287px;width:1.5px;height:17px;background:#1a6ac0;"></div>
<div class="t" style="left:731.4px;top:283.8px;color:#000;letter-spacing:-1.000px;">00%</div>
<div style="left:720px;top:314px;width:60px;height:4px;background:#ababab;"></div>
<div style="left:724px;top:318px;width:40px;height:716px;background:#f0f0f0;"></div>
<div style="left:762px;top:318px;width:2px;height:14px;background:#a8a8a8;"></div>
<div style="left:764px;top:318px;width:16px;height:12px;background:#ffffff;"></div>
<div style="left:764px;top:330px;width:16px;height:2px;background:#b0b0b0;"></div>
<div style="left:764px;top:332px;width:2px;height:702px;background:#a8a8a8;"></div>
<div style="left:766px;top:332px;width:14px;height:30px;background:#ffffff;"></div>
<svg style="left:772px;top:344px;" width="8" height="8" viewBox="0 0 8 8"><path d="M8 0 V8 H0 Z" fill="#b4b4b4"/></svg>
<div style="left:766px;top:362px;width:14px;height:2px;background:#b0b0b0;"></div>
<div style="left:766px;top:364px;width:14px;height:2px;background:#ffffff;"></div>
<div style="left:766px;top:366px;width:14px;height:2px;background:#a8a8a8;"></div>
<div style="left:766px;top:368px;width:14px;height:666px;background:#ffffff;"></div>
<div style="left:792px;top:226px;width:540px;height:808px;background:#d0d0d0;"></div>
<div style="left:794px;top:228px;width:536px;height:806px;background:#fafafa;"></div>
<div style="left:794px;top:228px;width:536px;height:44px;background:#0074cf;"></div>
<div class="t" style="left:804.1px;top:239.8px;color:#ffffff;letter-spacing:1.200px;">Moduli</div>
<svg style="left:898px;top:246px;" width="322" height="10" viewBox="0 0 322 10"><defs><pattern id="dp792" width="8" height="8" patternUnits="userSpaceOnUse"><rect x="0" y="0" width="2" height="2" fill="#9cc4ec"/><rect x="4" y="4" width="2" height="2" fill="#9cc4ec"/></pattern></defs><rect width="322" height="10" fill="url(#dp792)"/></svg>
<svg style="left:1238px;top:250px;" width="16" height="8" viewBox="0 0 16 8"><path d="M0 0 H16 L8 8 Z" fill="#a8ccee"/></svg>
<svg style="left:1270px;top:240px;" width="14" height="20" viewBox="0 0 14 20"><path d="M3 1 H11.5 V12 H3 Z" fill="none" stroke="#a8ccee" stroke-width="2"/><rect x="7.5" y="1" width="4" height="11" fill="#a8ccee"/><rect x="0" y="12" width="14" height="2" fill="#a8ccee"/><rect x="6" y="14" width="2" height="6" fill="#a8ccee"/></svg>
<svg style="left:1301px;top:241px;" width="18" height="18" viewBox="0 0 18 18"><path d="M2 2 L16 16 M16 2 L2 16" stroke="#a8ccee" stroke-width="2.6" stroke-linecap="round"/></svg>
<div style="left:814px;top:282px;width:496px;height:44px;background:#e0e6ee;"></div>
<div style="left:814px;top:282px;width:496px;height:2px;background:#9c9ca4;"></div>
<div style="left:816px;top:284px;width:492px;height:40px;background:#ffffff;"></div>
<div style="left:818px;top:284px;width:443px;height:40px;overflow:hidden">
<div class="t" style="left:6.7px;top:9.7px;font-style:italic;color:#6e6e6e;letter-spacing:-0.049px;">Cerca Routine / Modulo / Numero di Linea (</div>
</div>
<svg style="left:1272px;top:291px;" width="28" height="28" viewBox="0 0 28 28"><defs><linearGradient id="pg792" x1="0" y1="0" x2="0" y2="1"><stop offset="0" stop-color="#5aa0e0"/><stop offset="1" stop-color="#2c5aa0"/></linearGradient></defs><circle cx="17" cy="10" r="6.3" fill="none" stroke="url(#pg792)" stroke-width="2.5"/><line x1="4" y1="22.5" x2="11.5" y2="15" stroke="#2e5a9c" stroke-width="3" stroke-linecap="round"/></svg>
<div style="left:794px;top:336px;width:536px;height:698px;background:#a8a8a8;"></div>
<div style="left:796px;top:338px;width:532px;height:696px;background:#fafafa;"></div>
<svg style="left:810px;top:347.6px;" width="15" height="14" viewBox="0 0 15 14"><path d="M14 0.5 V13.5 H1 Z" fill="#222"/></svg>
<svg style="left:841px;top:345px;" width="30" height="23" viewBox="0 0 30 23"><path d="M4 13 V5.5 H9.9 L14.3 1.5 H27.7 V21.5 H26" fill="none" stroke="#e8c382" stroke-width="2.1"/><path d="M1.1 13 H20 L25.8 21.6 H5.5 Z" fill="#e8c382"/></svg>
<div class="t" style="left:879.6px;top:348.0px;font-weight:bold;color:#000;letter-spacing:0.333px;">Default Group</div>
<svg style="left:853px;top:388px;" width="12" height="22" viewBox="0 0 12 22"><path d="M1.8 2.2 L9.6 11 L1.8 19.8 Z" fill="none" stroke="#8a8a8a" stroke-width="1.7" stroke-linejoin="miter"/></svg>
<svg style="left:882px;top:386px;" width="28" height="28" viewBox="0 0 28 28"><rect x="2" y="2" width="14" height="14" fill="#f0f0f2"/><path d="M8 16 H2 V2 H16 V8" fill="none" stroke="#404040" stroke-width="4" stroke-linecap="square"/><rect x="8" y="8" width="22" height="22" fill="#fafafa"/><rect x="12" y="12" width="14" height="14" fill="#f0f0f2" stroke="#404040" stroke-width="4"/></svg>
<div class="t" style="left:919.6px;top:388.0px;font-weight:bold;color:#000;letter-spacing:0.000px;">B4XMainPage</div>
<div class="t" style="left:1091.8px;top:388.0px;font-size:22px;line-height:22px;color:#7c7c80;letter-spacing:-1.250px;">(..)</div>
<div style="left:916px;top:414px;width:165.7px;height:4px;background:#e8000a;"></div>
<svg style="left:853px;top:430px;" width="12" height="22" viewBox="0 0 12 22"><path d="M1.8 2.2 L9.6 11 L1.8 19.8 Z" fill="none" stroke="#8a8a8a" stroke-width="1.7" stroke-linejoin="miter"/></svg>
<svg style="left:881px;top:429.5px;" width="30" height="24" viewBox="0 0 30 24"><rect x="2" y="1.2" width="14" height="4" fill="#d0d0d0" stroke="#505050" stroke-width="1.7"/><rect x="21" y="2" width="8" height="3.6" fill="#404040"/><rect x="5.3" y="10" width="19.5" height="3.7" fill="#404040"/><rect x="1.2" y="18" width="9.7" height="3.7" fill="#404040"/><rect x="15.1" y="18" width="7.8" height="3.7" fill="#404040"/></svg>
<div class="t" style="left:919.6px;top:432.0px;color:#000;letter-spacing:0.667px;">Main</div>
</body></html>
